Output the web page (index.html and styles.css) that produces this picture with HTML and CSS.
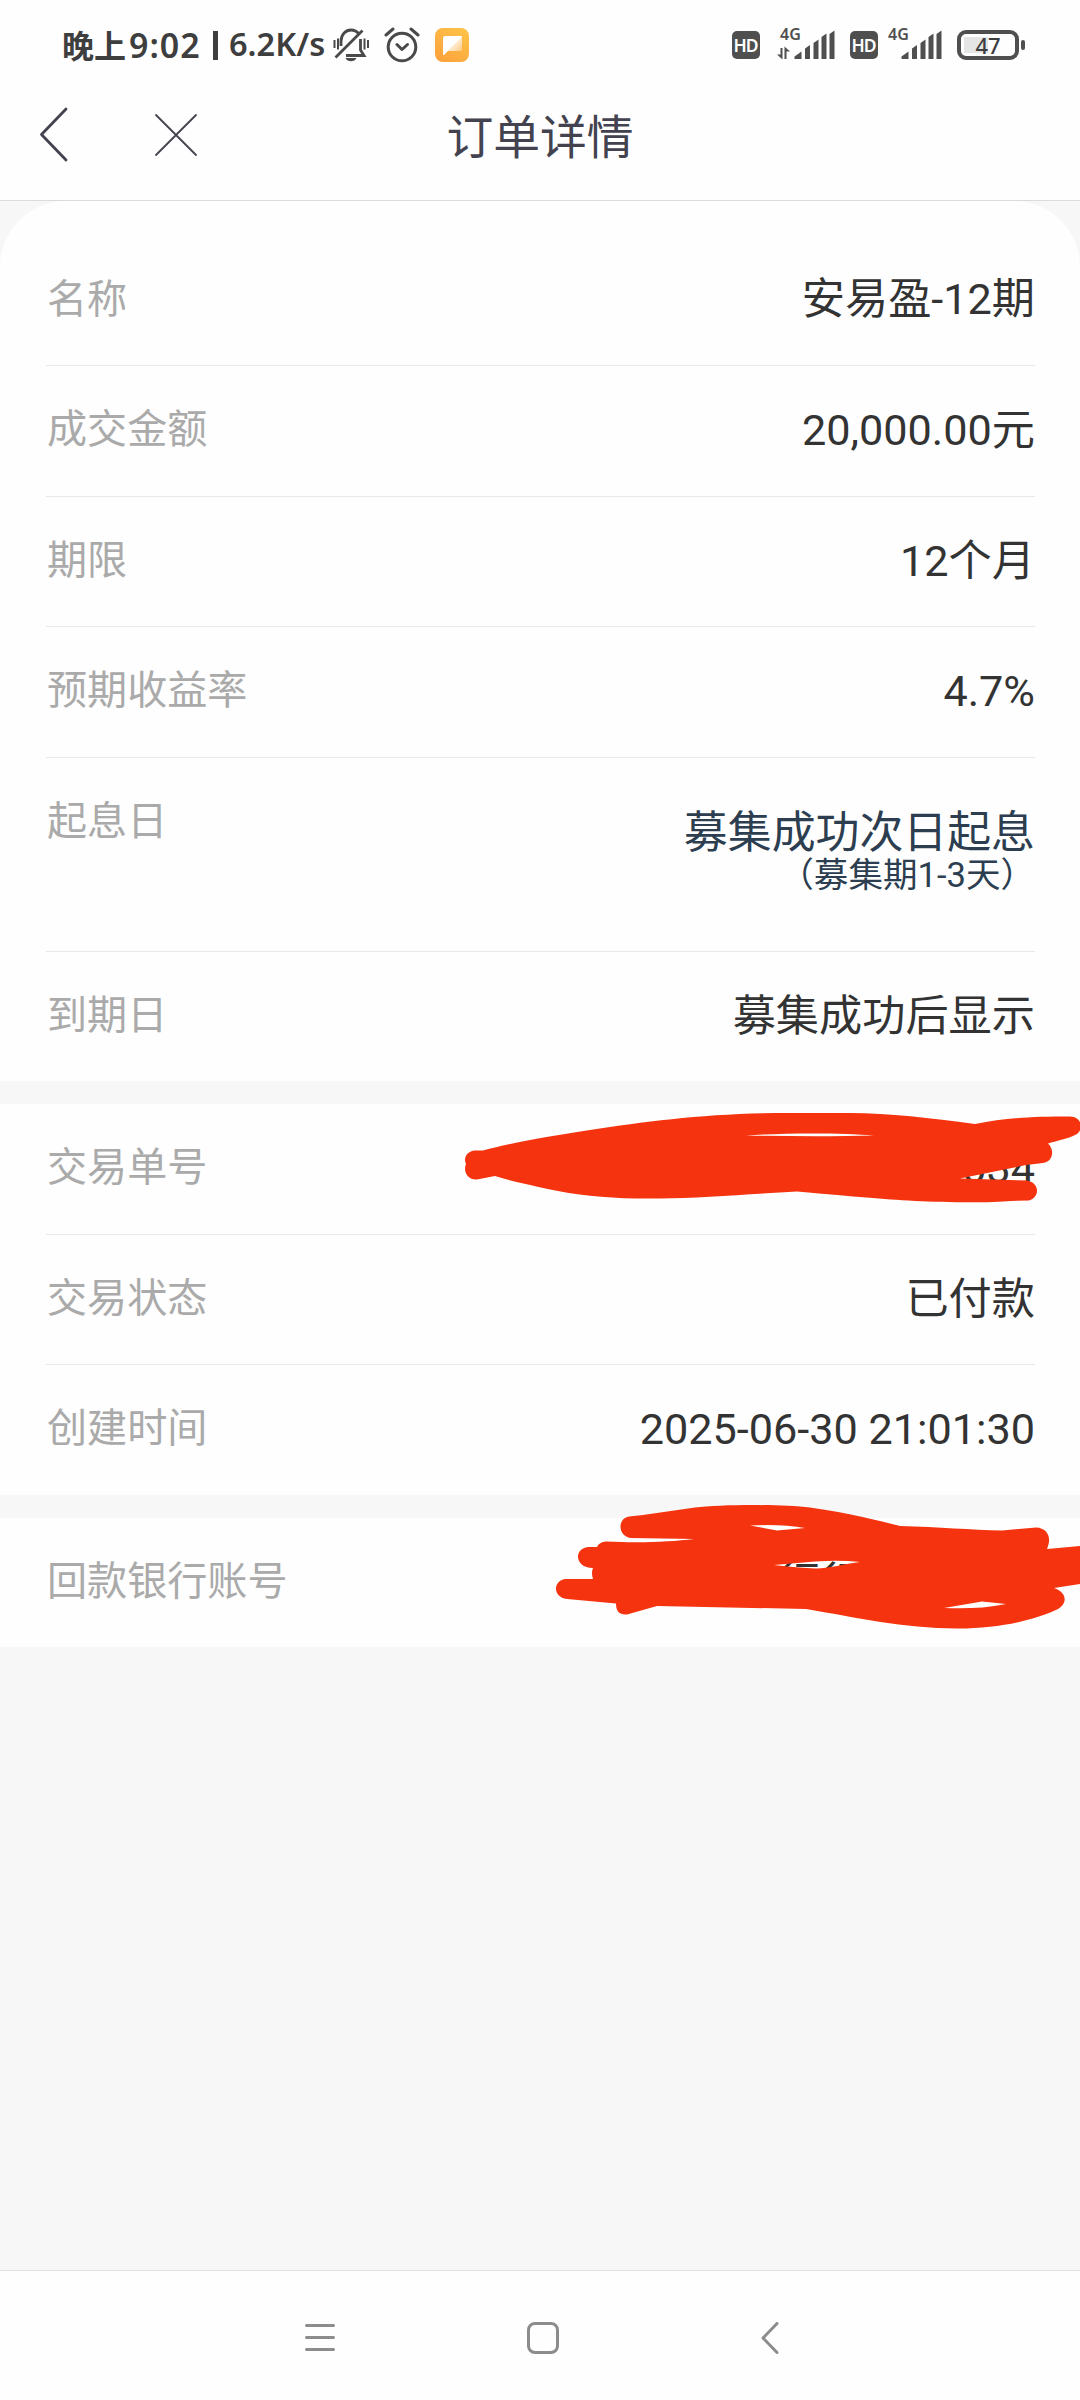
FILE: index.html
```html
<!DOCTYPE html>
<html lang="zh-CN">
<head>
<meta charset="utf-8">
<title>订单详情</title>
<link rel="stylesheet" href="styles.css">
</head>
<body>
<div class="screen">
  <header class="status">
    <div class="status-left">
      <span class="clock">晚上<span class="clock-digits">9:02</span></span>
      <span class="bar"></span>
      <span class="speed">6.2K/s</span>
      <svg class="ic-bell" width="36" height="36" viewBox="0 0 36 36" fill="none" stroke="#4a4a4a" stroke-width="2.8">
        <path d="M8 19V14.500C8 7 13 3 18 3c3.500 0 6 1.500 8 4M27.500 12v11l3.500 5.500H13M2.500 30.500L29.500 3.500"/>
        <path d="M1.500 13v8M5 11.500v11M31.500 11.500v11M35 13v8" stroke-width="2"/>
        <path d="M12.500 31h11c-1 2.300-3 3.300-5.500 3.300s-4.500-1-5.500-3.300z" fill="#4a4a4a" stroke="none"/>
      </svg>
      <svg class="ic-alarm" width="36" height="36" viewBox="0 0 36 36" fill="none" stroke="#4a4a4a" stroke-width="3" stroke-linecap="round" stroke-linejoin="round">
        <circle cx="18" cy="20" r="13.800"/>
        <path d="M13 17.500l5 5 5.500-5M2 8l7-6M34 8l-7-6"/>
      </svg>
      <svg class="ic-app" width="34" height="34" viewBox="0 0 34 34">
        <defs>
          <linearGradient id="app" x1="1" y1="0" x2="0.300" y2="1"><stop offset="0" stop-color="#ffc54a"/><stop offset="1" stop-color="#fba43c"/></linearGradient>
          <linearGradient id="fold" x1="0" y1="0" x2="1" y2="1"><stop offset="0.400" stop-color="#fff3e2"/><stop offset="1" stop-color="#ffc880"/></linearGradient>
        </defs>
        <rect width="34" height="34" rx="8" fill="url(#app)"/>
        <path d="M27 8.500V21q0 2-2 2H13z" fill="url(#fold)"/>
        <path d="M10 8h15.500q1.500 0 1.500 1L9.500 26.500Q8 28 8 26V10q0-2 2-2z" fill="#fff"/>
      </svg>
    </div>
    <div class="status-right">
      <span class="hd">HD</span>
      <svg class="sig sig-a" width="58" height="42" viewBox="0 -8 58 42" fill="#4f4f4f">
        <text x="3" y="13" class="net">4G</text>
        <path d="M3.500 21H5.500V32.500L0 27.500H3.500zM7.500 32V19.500L13 24.500H9.500V32z"/>
        <path d="M17.500 32v-2.500l7-5V32zM28 32V21.500l5-3.500v14zM36.500 32V16l5-3.500V32zM44.500 32V10l5-3.500V32zM52.500 32V7l5-3.500V32z"/>
      </svg>
      <span class="hd hd-b">HD</span>
      <svg class="sig sig-b" width="54" height="42" viewBox="0 -8 54 42" fill="#4f4f4f">
        <text x="0" y="13" class="net">4G</text>
        <path d="M13.500 32v-2.500l7-5V32zM24 32V21.500l5-3.500v14zM32.500 32V16l5-3.500V32zM40.500 32V10l5-3.500V32zM48.500 32V7l5-3.500V32z"/>
      </svg>
      <span class="battery"><span class="battery-body">47</span><span class="battery-tip"></span></span>
    </div>
  </header>

  <nav class="titlebar">
    <svg class="back" width="30" height="58" viewBox="0 0 30 58" fill="none" stroke="#434350" stroke-width="2.800" stroke-linecap="round" stroke-linejoin="round"><path d="M27 3L2.500 28.500 27 54"/></svg>
    <svg class="close" width="44" height="44" viewBox="0 0 44 44" fill="none" stroke="#434350" stroke-width="1.800" stroke-linecap="round"><path d="M2 2l40 40M42 2L2 42"/></svg>
    <h1 class="title">订单详情</h1>
  </nav>

  <main class="content">
    <section class="card card-first">
      <div class="row"><span class="label">名称</span><span class="value value-name">安易盈-12期</span></div>
      <div class="row"><span class="label">成交金额</span><span class="value">20,000.00元</span></div>
      <div class="row"><span class="label">期限</span><span class="value">12个月</span></div>
      <div class="row"><span class="label">预期收益率</span><span class="value">4.7%</span></div>
      <div class="row row-tall"><span class="label">起息日</span>
        <div class="stack"><span class="stack-main">募集成功次日起息</span><span class="stack-sub">（募集期1-3天）</span></div>
      </div>
      <div class="row"><span class="label">到期日</span><span class="value">募集成功后显示</span></div>
    </section>

    <section class="card">
      <div class="row"><span class="label">交易单号</span><span class="value">034</span>
        <svg class="scribble scribble-a" width="620" height="100" viewBox="460 1104 620 100" fill="#f6330f">
          <path fill-rule="evenodd" d="M475 1149.500H483C510 1142 540 1137 590 1129C650 1120 710 1112 790 1112H850C890 1112 930 1117 975 1123C1005 1117 1030 1115.500 1070 1115.500C1083 1116 1084 1130 1075 1134C1067 1138 1056 1140 1048 1142.500C1055 1149 1053 1161 1043 1162L1026 1164L960 1177.500L1027 1179.500C1040 1182 1040 1196 1029 1199.500L1011 1200C990 1202 945 1201.500 915 1200C880 1198 860 1196 797 1190.500C750 1193 700 1197 660 1197.500C620 1198 590 1196 558 1190C530 1184 515 1181 495 1175L477 1178.500C467 1179 463 1170 466 1163C463 1157 467 1150 475 1149.500zM746 1134.500C780 1132 840 1131.500 874 1134.500Q820 1136 746 1134.500z"/>
        </svg>
      </div>
      <div class="row"><span class="label">交易状态</span><span class="value">已付款</span></div>
      <div class="row"><span class="label">创建时间</span><span class="value">2025-06-30 21:01:30</span></div>
    </section>

    <section class="card">
      <div class="row"><span class="label">回款银行账号</span>
        <span class="value value-bank">行行</span>
        <svg class="scribble scribble-b" width="530" height="130" viewBox="550 1500 530 130" fill="#f6330f">
          <path fill-rule="evenodd" d="M629 1515.500L643 1514L695 1506.500C720 1503.500 780 1503 810 1506.500C850 1512 880 1520 900 1525C940 1526 970 1529 1002 1529.500L1036 1526.500C1048 1527 1052 1537 1047 1548L1080 1545V1583L1054 1587C1068 1592 1067 1603 1058 1608C1035 1619 1000 1627.500 958 1627.500C900 1627 860 1617 806 1608L657 1605L627 1613.500C619 1614 616 1610 616 1602.500L567 1598C552 1596 553 1579 566 1578H593Q591 1572 593 1567C575 1567 573 1548 588 1546H597Q599 1541 606 1540.500C640 1542 670 1541 694 1538L630 1537C617 1534 618 1517 629 1515.500zM750 1524.500Q782 1523 805 1527L777 1529.500zM774 1564L815 1560.500Q840 1559 860 1561C840 1563.500 830 1567.500 816 1567.500Q797 1566.500 774 1564zM944 1607L982 1600.500L1006 1603C985 1607.500 965 1607.500 944 1607z"/>
        </svg>
      </div>
    </section>
  </main>

  <footer class="navbar">
    <svg class="nav-menu" width="30" height="36" viewBox="0 0 30 36" stroke="#8c8c8c" stroke-width="3" stroke-linecap="round"><path d="M1.500 5.500h27M1.500 17.500h27M1.500 29.500h27"/></svg>
    <svg class="nav-home" width="32" height="32" viewBox="0 0 32 32" fill="none" stroke="#8c8c8c" stroke-width="3"><rect x="1.500" y="1.500" width="29" height="29" rx="6.500"/></svg>
    <svg class="nav-back" width="18" height="32" viewBox="0 0 18 32" fill="none" stroke="#8c8c8c" stroke-width="3" stroke-linecap="round" stroke-linejoin="round"><path d="M16 1.500L2 16l14 14.500"/></svg>
  </footer>
</div>
</body>
</html>
```

FILE: styles.css
```css
* { box-sizing: border-box; }

body {
  margin: 0;
  background: #f7f7f7;
  font-family: Roboto, "Noto Sans CJK SC", sans-serif;
  color: #333;
}

svg { display: block; flex: none; }

.screen {
  width: 1080px;
  height: 2400px;
  display: flex;
  flex-direction: column;
  overflow: hidden;
}

.status {
  height: 92px;
  padding: 0 55px 0 62px;
  background: #fefefe;
  display: flex;
  justify-content: space-between;
  flex: none;
}

.status-left, .status-right {
  display: flex;
  align-items: flex-start;
}

.clock, .speed {
  font-size: 32px;
  line-height: 44px;
  color: #3e3e3e;
  white-space: nowrap;
  margin-top: 22px;
}

.clock { width: 151px; font-weight: 700; font-family: "Noto Sans CJK SC", sans-serif; }
.clock-digits {
  font-family: "Noto Sans", sans-serif;
  font-weight: 600;
  font-size: 34px;
  letter-spacing: 1px;
  margin-left: 3px;
}
.bar { width: 5px; height: 29px; background: #3e3e3e; margin-top: 31px; }
.speed {
  width: 98px;
  margin-left: 11px;
  font-family: "Noto Sans", sans-serif;
  font-weight: 600;
  font-size: 32.500px;
}
.ic-bell { margin: 27px 0 0 6px; }
.ic-alarm { margin: 27px 0 0 15px; }
.ic-app { margin: 28px 0 0 15px; }

.hd {
  width: 28px;
  height: 28px;
  margin-top: 31px;
  border-radius: 5px;
  background: #4f4f4f;
  color: #fff;
  font: 600 17.500px/29px "Noto Sans", sans-serif;
  letter-spacing: -1px;
  text-indent: -1px;
  text-align: center;
}
.hd-b { margin-left: 15px; }
.sig { margin-top: 19px; }
.sig-a { margin-left: 17px; }
.sig-b { margin-left: 10px; }
.net { font: 600 16px "Noto Sans", sans-serif; }

.battery { display: flex; align-items: center; height: 30px; margin: 30px 0 0 15px; }
.battery-body {
  width: 62px;
  height: 30px;
  border: 4px solid #4f4f4f;
  border-radius: 9px;
  background: linear-gradient(#e5e5e5, #e5e5e5) 3px 3px / 24px 16px no-repeat;
  font: 500 22px/23px "Noto Sans", sans-serif;
  text-align: center;
  color: #3e3e3e;
}
.battery-tip { width: 4px; height: 10px; margin-left: 2px; border-radius: 2px; background: #4f4f4f; }

.titlebar {
  height: 109px;
  flex: none;
  display: grid;
  grid-template-columns: 40px 114px 1fr 154px;
  justify-items: start;
  align-items: start;
  background: #fefefe;
  border-bottom: 1px solid #dcdcdc;
}
.back { margin: 14px 0 0 39px; }
.close { margin: 21px 0 0 114px; }
.title {
  justify-self: center;
  margin: 20px 0 0;
  font-size: 46.800px;
  line-height: 52px;
  font-weight: 400;
  color: #434350;
}

.content {
  flex: 1;
  display: flex;
  flex-direction: column;
  gap: 22.600px;
}

.card { background: #fefefe; padding: 0 45px 0 46px; }
.card-first { padding-top: 34.750px; border-radius: 66px 66px 0 0; }

.row {
  position: relative;
  height: 130.550px;
  display: flex;
  justify-content: space-between;
  border-bottom: 1px solid #e8e8e8;
  line-height: 129px;
}
.row:last-child { height: 129.800px; border-bottom: 0; }
.row-tall { height: 193.700px; }

.label { font-size: 40.100px; color: #aaa; padding-left: 1px; line-height: 128px; }
.value { font-size: 43.200px; color: #333; }
.value-name { line-height: 127px; }
.value-bank { margin-right: 171px; line-height: 131px; }

.stack {
  display: flex;
  flex-direction: column;
  align-items: flex-end;
  padding-top: 50px;
  color: #2c3e50;
}
.stack-main { font-size: 43.900px; line-height: 50px; }
.stack-sub { font-size: 34.560px; line-height: 34px; }

.scribble { position: absolute; }
.scribble-a { left: 414px; top: 1px; }
.scribble-b { left: 504px; top: -17px; }

.navbar {
  height: 130px;
  flex: none;
  display: flex;
  align-items: center;
  padding-top: 5px;
  background: #fefefe;
  border-top: 1px solid #e0e0e0;
}
.nav-menu { margin-left: 305px; }
.nav-home { margin-left: 192px; }
.nav-back { margin-left: 202px; }
```
